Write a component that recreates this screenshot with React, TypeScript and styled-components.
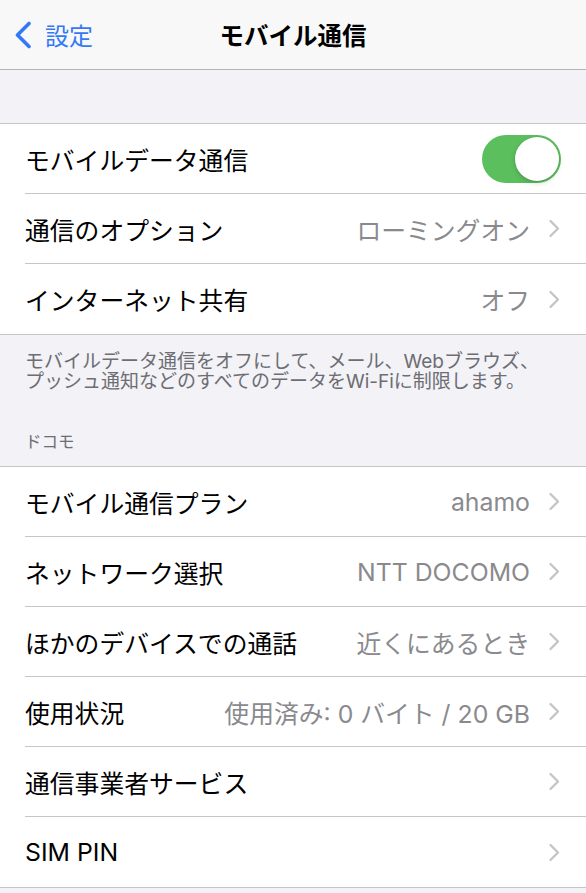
import React from "react";
import styled, { createGlobalStyle } from "styled-components";

const GlobalStyle = createGlobalStyle`
  html, body {
    margin: 0;
    padding: 0;
    background-color: #f2f2f7;
    font-family: "Inter", "Noto Sans CJK JP", sans-serif;
    -webkit-font-smoothing: antialiased;
  }
`;

const Page = styled.div`
  width: 586px;
  min-height: 893px;
  background-color: #f2f2f7;
`;

const NavBar = styled.header`
  display: grid;
  grid-template-columns: 1fr auto 1fr;
  align-items: center;
  height: 69px;
  background-color: #f8f8f8;
  border-bottom: 1px solid #b4b4b6;
`;

const BackButton = styled.div`
  display: flex;
  align-items: center;
  gap: 13px;
  padding-left: 14px;
  color: #3478f6;
  font-size: 24px;
`;

const NavTitle = styled.h1`
  margin: 0;
  font-size: 24.5px;
  font-weight: 700;
  color: #000;
`;

const Spacer = styled.div<{ $height: number }>`
  height: ${(p) => p.$height}px;
`;

const Group = styled.section`
  background-color: #fff;
  border-top: 1px solid #c6c6c8;
  border-bottom: 1px solid #c6c6c8;
`;

const Row = styled.div`
  display: flex;
  padding-left: 25px;

  &:last-child > div {
    border-bottom: none;
  }
`;

const RowInner = styled.div`
  flex: 1;
  display: flex;
  align-items: center;
  box-sizing: border-box;
  height: 70px;
  padding-right: 25px;
  border-bottom: 1px solid #c6c6c8;
`;

const Label = styled.span`
  flex: 1;
  font-size: 24.8px;
  color: #000;
  white-space: nowrap;
`;

const Value = styled.span`
  font-size: 24.8px;
  color: #8a8a8e;
  white-space: nowrap;
  margin-right: 18px;
`;

const Toggle = styled.div<{ $on: boolean }>`
  display: flex;
  justify-content: ${(p) => (p.$on ? "flex-end" : "flex-start")};
  align-items: center;
  box-sizing: border-box;
  width: 79px;
  height: 48px;
  padding: 2px;
  border-radius: 24px;
  background-color: ${(p) => (p.$on ? "#5bbf5d" : "#e9e9ea")};
`;

const Knob = styled.div`
  width: 44px;
  height: 44px;
  border-radius: 50%;
  background-color: #fff;
  box-shadow: 0 2px 5px rgba(0, 0, 0, 0.18), 0 0 0 0.5px rgba(0, 0, 0, 0.06);
`;

const Footer = styled.p`
  margin: 0;
  padding: 17px 25px 0;
  font-size: 19px;
  line-height: 19.5px;
  color: #6d6d72;
`;

const SectionHeader = styled.h2`
  margin: 0;
  padding: 41px 25px 14px;
  font-size: 16.5px;
  line-height: 20px;
  font-weight: 400;
  color: #6d6d72;
`;

const Chevron = () => (
  <svg width="13" height="19" viewBox="0 0 13 19" fill="none">
    <path
      d="M2.5 2 L10 9.5 L2.5 17"
      stroke="#c4c4c7"
      strokeWidth="2.3"
      strokeLinecap="round"
      strokeLinejoin="round"
    />
  </svg>
);

const BackChevron = () => (
  <svg width="18" height="28" viewBox="0 0 18 28" fill="none">
    <path
      d="M15 2.5 L3.5 14 L15 25.5"
      stroke="#3478f6"
      strokeWidth="3.6"
      strokeLinecap="round"
      strokeLinejoin="round"
    />
  </svg>
);

type Item = { label: string; value?: string };

const carrierItems: Item[] = [
  { label: "モバイル通信プラン", value: "ahamo" },
  { label: "ネットワーク選択", value: "NTT DOCOMO" },
  { label: "ほかのデバイスでの通話", value: "近くにあるとき" },
  { label: "使用状況", value: "使用済み: 0 バイト / 20 GB" },
  { label: "通信事業者サービス" },
  { label: "SIM PIN" },
];

const LinkRow: React.FC<Item> = ({ label, value }) => (
  <Row>
    <RowInner>
      <Label>{label}</Label>
      {value && <Value>{value}</Value>}
      <Chevron />
    </RowInner>
  </Row>
);

export default function App() {
  return (
    <Page>
      <GlobalStyle />
      <NavBar>
        <BackButton>
          <BackChevron />
          設定
        </BackButton>
        <NavTitle>モバイル通信</NavTitle>
        <div />
      </NavBar>

      <Spacer $height={53} />

      <Group>
        <Row>
          <RowInner>
            <Label>モバイルデータ通信</Label>
            <Toggle $on>
              <Knob />
            </Toggle>
          </RowInner>
        </Row>
        <LinkRow label="通信のオプション" value="ローミングオン" />
        <LinkRow label="インターネット共有" value="オフ" />
      </Group>

      <Footer>
        モバイルデータ通信をオフにして、メール、Webブラウズ、
        <br />
        プッシュ通知などのすべてのデータをWi-Fiに制限します。
      </Footer>
      <SectionHeader>ドコモ</SectionHeader>

      <Group>
        {carrierItems.map((item) => (
          <LinkRow key={item.label} {...item} />
        ))}
      </Group>
    </Page>
  );
}
